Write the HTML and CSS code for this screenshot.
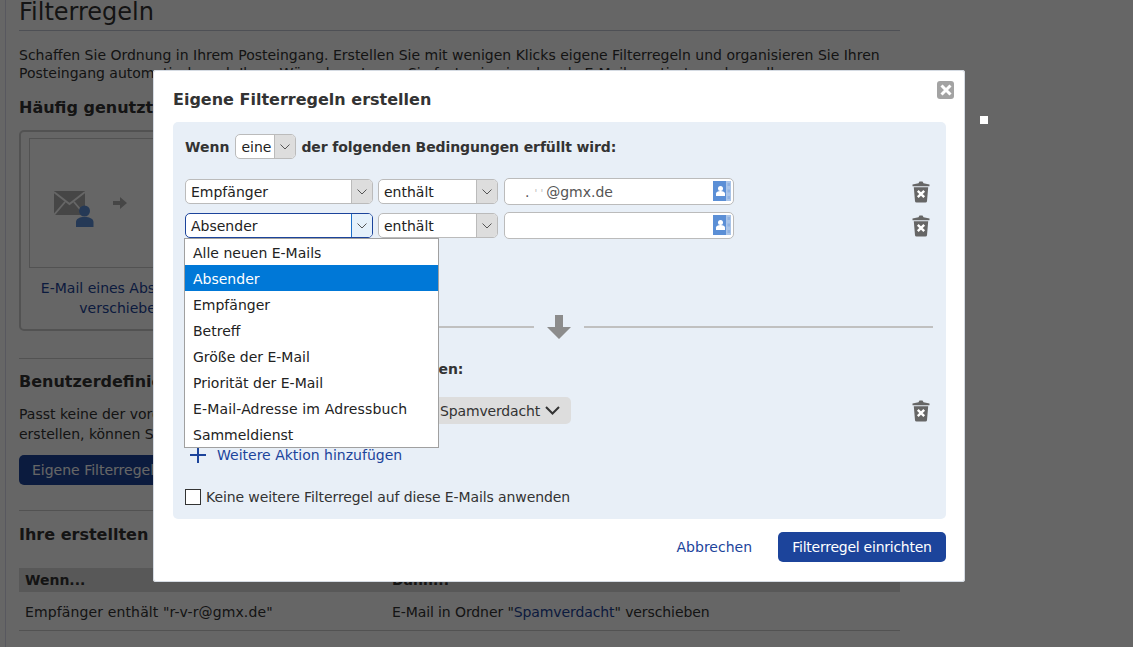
FILE: index.html
```html
<!DOCTYPE html>
<html lang="de">
<head>
<meta charset="utf-8">
<title>Filterregeln</title>
<link rel="stylesheet" href="styles.css">
</head>
<body>
<svg class="defs" width="0" height="0" aria-hidden="true">
  <symbol id="trash" viewBox="0 0 18 22">
    <path fill="#666" d="M6.500 2.200 7.500.600h3l1 1.600 6 1.200v1.900H.5V3.400zM1.800 6.200h14.400l-1.200 14a1.600 1.600 0 0 1-1.600 1.400H4.600A1.600 1.600 0 0 1 3 20.200z"/>
    <path stroke="#fff" stroke-width="2.400" fill="none" d="M5.800 9.800l6.400 6.400M12.200 9.800l-6.400 6.400"/>
  </symbol>
  <symbol id="book" viewBox="0 0 18 20">
    <rect width="13.500" height="20" fill="#5b8fd6"/>
    <rect x="13.500" width="4.500" height="20" fill="#a9c4e8"/>
    <path fill="#8fb2e2" d="M14.500 2h2.500v3h-2.500zM14.500 8.500h2.500v3h-2.500zM14.500 15h2.500v3h-2.500z"/>
    <circle cx="7.500" cy="7.500" r="2.500" fill="#fff"/>
    <path fill="#fff" d="M3 15v-2.500c0-1.500 2-2.500 4.500-2.500s4.500 1 4.500 2.500V15z"/>
  </symbol>
  <symbol id="chev" viewBox="0 0 10 6">
    <path fill="none" stroke="#555" stroke-width="1" d="M.5.500 5 5 9.500.500"/>
  </symbol>
</svg>

<main class="page">
  <h1 class="title">Filterregeln</h1>
  <p class="intro">Schaffen Sie Ordnung in Ihrem Posteingang. Erstellen Sie mit wenigen Klicks eigene Filterregeln und organisieren Sie Ihren Posteingang automatisch nach Ihren Wünschen. Legen Sie fest, wie eingehende E-Mails sortiert werden sollen.</p>
  <h2 class="heading first">Häufig genutzte Filterregeln</h2>
  <section class="card">
    <div class="card-art">
      <svg class="mail-icon" width="40" height="36" viewBox="0 0 40 36">
        <path fill="#b0b0b0" d="M0 0h31v24H0z"/>
        <path fill="none" stroke="#fff" stroke-width="1.800" d="M0 1l15.500 12L31 1M0 24l11-13M31 24 20 11"/>
        <circle cx="30.500" cy="20" r="5.500" fill="#5d8fd6"/>
        <path fill="#5d8fd6" d="M22 36v-5c0-3 3-5 8.500-5s9 2 9 5v5z"/>
      </svg>
      <svg class="flow-arrow" width="14" height="12" viewBox="0 0 14 12"><path fill="#b0b0b0" d="M0 4h7V0l7 6-7 6V8H0z"/></svg>
    </div>
    <p class="card-text">E-Mail eines Absenders verschieben</p>
  </section>
  <hr class="rule">
  <h2 class="heading">Benutzerdefinierte Filterregeln</h2>
  <p class="custom">Passt keine der vorgeschlagenen Filterregeln? Um eine eigene Regel zu<br>erstellen, können Sie hier beginnen.</p>
  <a class="bg-button">Eigene Filterregeln erstellen</a>
  <hr class="rule second">
  <h2 class="heading">Ihre erstellten Filterregeln</h2>
  <div class="table-head"><span>Wenn...</span><span>Dann...</span></div>
  <div class="table-row"><span class="row-when">Empfänger enthält "r-v-r@gmx.de"</span><span class="row-then">E-Mail in Ordner "<a class="bg-link">Spamverdacht</a>" verschieben</span></div>
</main>

<div class="overlay"></div>
<div class="marker"></div>

<section class="modal">
  <h2 class="modal-title">Eigene Filterregeln erstellen</h2>
  <button class="close" aria-label="Schließen">
    <svg width="12" height="12" viewBox="0 0 12 12"><path stroke="#fff" stroke-width="3" d="M1.500 1.500l9 9M10.500 1.500l-9 9"/></svg>
  </button>
  <div class="panel">
    <div class="when">
      <strong>Wenn</strong>
      <div class="select tiny"><span class="val">eine</span><span class="arrow"><svg width="10" height="6"><use href="#chev"/></svg></span></div>
      <strong class="when-rest">der folgenden Bedingungen erfüllt wird:</strong>
    </div>

    <div class="cond first-cond">
      <div class="select wide"><span class="val">Empfänger</span><span class="arrow"><svg width="10" height="6"><use href="#chev"/></svg></span></div>
      <div class="select mid"><span class="val">enthält</span><span class="arrow"><svg width="10" height="6"><use href="#chev"/></svg></span></div>
      <div class="input"><span class="mail"><span class="dot">.</span><span class="faint">' '</span>@gmx.de</span><svg class="book" width="18" height="20"><use href="#book"/></svg></div>
      <svg class="trash" width="18" height="22"><use href="#trash"/></svg>
    </div>
    <div class="cond">
      <div class="select wide active"><span class="val">Absender</span><span class="arrow"><svg width="10" height="6"><use href="#chev"/></svg></span></div>
      <div class="select mid"><span class="val">enthält</span><span class="arrow"><svg width="10" height="6"><use href="#chev"/></svg></span></div>
      <div class="input"><svg class="book" width="18" height="20"><use href="#book"/></svg></div>
      <svg class="trash" width="18" height="22"><use href="#trash"/></svg>
    </div>

    <ul class="dropdown">
      <li>Alle neuen E-Mails</li>
      <li class="selected">Absender</li>
      <li>Empfänger</li>
      <li>Betreff</li>
      <li>Größe der E-Mail</li>
      <li>Priorität der E-Mail</li>
      <li class="long">E-Mail-Adresse im Adressbuch</li>
      <li>Sammeldienst</li>
    </ul>

    <div class="divider">
      <span class="line"></span>
      <svg width="24" height="24" viewBox="0 0 24 24"><path fill="#8c8c8c" d="M8 0h8v12h8L12 24 0 12h8z"/></svg>
      <span class="line"></span>
    </div>

    <div class="then"><strong>Dann folgende Aktionen ausführen:</strong></div>

    <div class="action">
      <div class="chip">Spamverdacht
        <svg width="15" height="9" viewBox="0 0 15 9"><path fill="none" stroke="#333" stroke-width="2" d="M1 1l6.500 6.500L14 1"/></svg>
      </div>
      <svg class="trash" width="18" height="22"><use href="#trash"/></svg>
    </div>

    <a class="add">
      <svg width="16" height="16" viewBox="0 0 16 16"><path stroke="#1c449b" stroke-width="2" d="M8 0v16M0 8h16"/></svg>
      Weitere Aktion hinzufügen
    </a>

    <label class="check"><span class="box"></span>Keine weitere Filterregel auf diese E-Mails anwenden</label>
  </div>
  <div class="footer">
    <a class="cancel">Abbrechen</a>
    <button class="submit">Filterregel einrichten</button>
  </div>
</section>
</body>
</html>
```
FILE: styles.css
```css
* { box-sizing: border-box; }
html, body { margin: 0; height: 647px; overflow: hidden; }
body {
  background: #fff;
  font-family: "DejaVu Sans", Verdana, sans-serif;
  font-size: 14px;
  color: #333;
  position: relative;
}
.defs { position: absolute; }

/* page behind the dialog */
.page {
  width: 900px;
  height: 647px;
  margin-left: 5px;
  padding-left: 13px;
  border-left: 1px solid #dde;
  overflow: hidden;
}
.title {
  margin: 0;
  height: 31px;
  font-size: 24px;
  font-weight: 400;
  line-height: 24px;
  border-bottom: 1px solid #c3c8d4;
  width: 881px;
}
.intro { margin: 15px 0 0; line-height: 18px; width: 881px; height: 36px; overflow: hidden; }
.heading { margin: 0; font-size: 16px; font-weight: 700; line-height: 20px; }
.heading.first { margin-top: 16px; }
.card {
  margin-top: 12px;
  width: 206px;
  height: 201px;
  padding: 6px 8px;
  border: 2px solid #ccc;
  border-radius: 5px;
}
.card-art {
  height: 130px;
  border: 1px solid #ccc;
  display: flex;
  align-items: center;
  gap: 19px;
  padding: 12px 0 0 24px;
}
.flow-arrow { margin-bottom: 12px; }
.card-text { margin: 10px -4px 0; text-align: center; line-height: 20px; color: #1c449b; }
.rule { margin: 27px 0 0; width: 881px; border: 0; border-top: 1px solid #ccc; }
.rule + .heading { margin-top: 13px; }
.custom { margin: 12px 0 0; line-height: 20px; height: 40px; width: 520px; }
.bg-button {
  display: block;
  margin-top: 11px;
  width: 200px;
  height: 30px;
  padding-left: 13px;
  line-height: 30px;
  background: #1c449b;
  color: #fff;
  border-radius: 5px;
}
.rule.second { margin-top: 25px; }
.rule.second + .heading { margin-top: 14px; }
.table-head, .table-row {
  width: 881px;
  padding-left: 6px;
  display: grid;
  grid-template-columns: 367px 1fr;
}
.table-head {
  margin-top: 23px;
  height: 24px;
  line-height: 24px;
  font-weight: 700;
  background: #dcdcdc;
}
.table-row { height: 39px; line-height: 41px; border-bottom: 1px solid #ccc; }
.row-when { letter-spacing: .13px; }
.row-then { letter-spacing: -.1px; }
.bg-link { color: #1c449b; }

/* dim layer */
.overlay { position: absolute; inset: 0; background: rgba(0, 0, 0, .6); }
.marker { position: absolute; left: 980px; top: 116px; width: 8px; height: 8px; background: #fff; }

/* dialog */
.modal {
  position: absolute;
  left: 153px;
  top: 70px;
  width: 812px;
  height: 512px;
  padding: 0 19px 0 20px;
  background: #fff;
  border-radius: 3px;
  box-shadow: inset 0 0 0 1px #d5dbe3;
}
.modal-title {
  margin: 0;
  height: 52px;
  padding-top: 9px;
  font-size: 16px;
  line-height: 42px;
  font-weight: 700;
  color: #333;
}
.close {
  position: absolute;
  left: 784px;
  top: 11px;
  width: 17px;
  height: 18px;
  padding: 0;
  border: 0;
  border-radius: 3px;
  background: #a3a3a3;
  display: flex;
  align-items: center;
  justify-content: center;
}
.panel {
  position: relative;
  width: 773px;
  height: 397px;
  padding: 12px 12px 0;
  background: #e8eff7;
  border-radius: 5px;
}
.when { display: flex; align-items: center; height: 25px; }
.when strong, .then strong { font-weight: 700; }
.when .select { margin: 0 5px 0 6px; }
.when-rest { letter-spacing: -.1px; }
.then strong { letter-spacing: -.1px; }

.select {
  display: flex;
  height: 25px;
  background: #fff;
  border: 1px solid #bbb;
  border-radius: 5px;
  overflow: hidden;
}
.select .val { flex: 1; padding-left: 5px; line-height: 25px; color: #222; }
.select .arrow {
  width: 21px;
  display: flex;
  align-items: center;
  justify-content: center;
  background: #ddd;
  border-left: 1px solid #bbb;
}
.select .arrow svg { display: block; }
.select.tiny { width: 61px; }
.select.wide { width: 188px; }
.select.mid { width: 120px; }
.select.active { border-color: #1c449b; }
.select.active .arrow { background: #e5f1fb; border-left-color: #1c6fc9; }

.cond { display: flex; align-items: center; height: 27px; margin-top: 7px; }
.first-cond { margin-top: 19px; }
.cond .select.wide { margin-right: 5px; }
.cond .select.mid { margin-right: 6px; }
.input {
  position: relative;
  width: 230px;
  height: 27px;
  background: #fff;
  border: 1px solid #bbb;
  border-radius: 5px;
  overflow: hidden;
}
.mail { position: absolute; left: 20px; top: 0; line-height: 26px; color: #555; }
.dot { margin-right: 5px; }
.faint { color: #bbb; font-size: 10px; margin-right: 3px; }
.book { position: absolute; right: 2px; top: 2px; display: block; }
.trash { display: block; margin-left: 178px; }

.dropdown {
  position: absolute;
  left: 11px;
  top: 116px;
  width: 255px;
  margin: 0;
  padding: 0;
  list-style: none;
  background: #fff;
  border: 1px solid #a0a0a0;
  z-index: 2;
}
.dropdown li { height: 26px; padding-left: 8px; line-height: 28px; color: #222; }
.dropdown .selected { background: #0078d7; color: #fff; }
.dropdown .long { letter-spacing: .15px; }

.divider { display: flex; align-items: center; margin-top: 76px; height: 24px; }
.divider .line { height: 2px; background: #c0c0c0; }
.divider .line:first-child { width: 349px; margin-right: 13px; }
.divider .line:last-child { width: 349px; margin-left: 13px; }
.then { margin-top: 20px; line-height: 20px; }
.action { display: flex; align-items: center; height: 27px; margin-top: 18px; }
.chip {
  margin-left: 180px;
  width: 206px;
  height: 27px;
  padding-left: 75px;
  display: flex;
  align-items: center;
  gap: 5px;
  background: #ddd;
  border-radius: 5px;
  letter-spacing: -.15px;
}
.action .trash { margin-left: 341px; }
.add { display: flex; align-items: center; gap: 11px; margin: 21px 0 0 5px; color: #1c449b; height: 20px; line-height: 21px; }
.check { display: flex; align-items: center; gap: 5px; margin-top: 22px; height: 20px; color: #333; letter-spacing: -.1px; }
.box { width: 16px; height: 16px; background: #fff; border: 1px solid #333; }

.footer {
  display: flex;
  align-items: center;
  justify-content: flex-end;
  gap: 26px;
  margin-top: 13px;
  width: 773px;
}
.cancel { color: #1c449b; }
.submit {
  width: 168px;
  height: 30px;
  padding: 0;
  border: 0;
  border-radius: 5px;
  background: #1c449b;
  color: #fff;
  font: 14px "DejaVu Sans", Verdana, sans-serif;
  letter-spacing: -.25px;
}
```
